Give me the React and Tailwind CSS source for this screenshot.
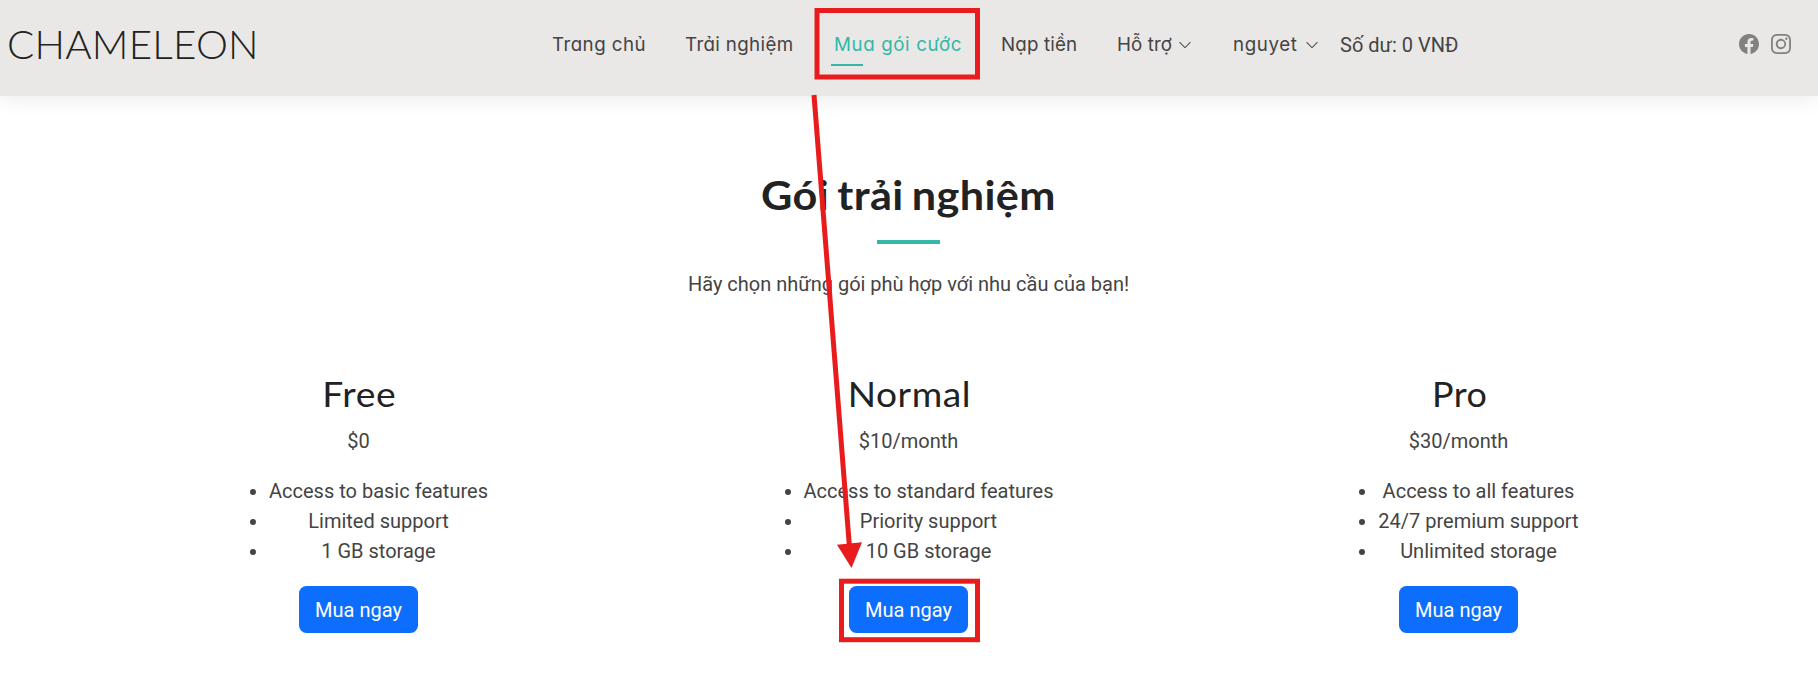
import { BsChevronDown, BsFacebook, BsInstagram } from "react-icons/bs";

const plans = [
  {
    name: "Free",
    price: "$0",
    features: ["Access to basic features", "Limited support", "1 GB storage"],
    stretch: "scale-x-[1.08]",
  },
  {
    name: "Normal",
    price: "$10/month",
    features: ["Access to standard features", "Priority support", "10 GB storage"],
    stretch: "scale-x-[1.075]",
  },
  {
    name: "Pro",
    price: "$30/month",
    features: ["Access to all features", "24/7 premium support", "Unlimited storage"],
    stretch: "scale-x-[1.04]",
  },
];

const links = [
  { label: "Trang chủ", box: "w-[133px]", spacing: "tracking-[0.45px]" },
  { label: "Trải nghiệm", box: "w-[149px]", spacing: "tracking-[0.35px]" },
  { label: "Mua gói cước", box: "w-[167px]", spacing: "tracking-[0.6px]", active: true },
  { label: "Nạp tiền", box: "w-[116px]", spacing: "tracking-[0.15px]" },
  { label: "Hỗ trợ", box: "w-[116px]", spacing: "tracking-[0.1px]", menu: "ml-[6px]" },
  { label: "nguyet", box: "w-[107px]", spacing: "tracking-[0.6px]", menu: "ml-[7px]" },
];

function NavLink({ label, box, spacing, active, menu }) {
  return (
    <a className={`relative flex shrink-0 items-center whitespace-nowrap ${box} ${active ? "text-[#34b7a7]" : ""}`}>
      <span className={spacing}>{label}</span>
      {menu && <BsChevronDown className={`size-[14px] ${menu}`} />}
      {active && <span className="absolute top-[33px] -left-[3px] h-[2px] w-8 bg-[#34b7a7]" />}
    </a>
  );
}

function Header() {
  return (
    <header className="flex h-24 items-start bg-[#e9e8e6] shadow-[0_0_22px_rgba(0,0,0,0.1)]">
      <div className="w-[552px] shrink-0 pt-[20px] pl-[7px]">
        <div className="origin-left scale-x-[1.022] font-['Lato',sans-serif] text-[39.5px] leading-[48px] font-light tracking-[0.2px] text-[#222222]">
          CHAMELEON
        </div>
      </div>
      <nav className="flex pt-[31px] font-['Inter',sans-serif] text-[18.75px] leading-[28px] [font-feature-settings:'cv11']">
        {links.map((link) => (
          <NavLink key={link.label} {...link} />
        ))}
      </nav>
      <span className="pt-[30px] text-[20px] leading-[30px] whitespace-nowrap">Số dư: 0 VNĐ</span>
      <div className="ml-auto flex gap-[12px] pt-[34px] pr-[27px] text-[#828180]">
        <BsFacebook className="size-5" />
        <BsInstagram className="size-5" />
      </div>
    </header>
  );
}

function Plan({ name, price, features, stretch }) {
  return (
    <div className="flex w-[550px] flex-col items-center">
      <h2 className={`-mt-px mb-[11px] pl-[2px] font-['Lato',sans-serif] text-[34.5px] leading-[42px] tracking-[0.5px] text-[#222222] ${stretch}`}>{name}</h2>
      <p className="mb-5">{price}</p>
      <ul className="mb-5 list-disc pl-10 text-center">
        {features.map((feature) => (
          <li key={feature}>{feature}</li>
        ))}
      </ul>
      <button className="h-[47px] w-[119px] rounded-[7.5px] bg-[#0d6efd] text-white">Mua ngay</button>
    </div>
  );
}

function Annotations() {
  return (
    <svg className="pointer-events-none absolute top-0 left-0" width="1818" height="697" fill="none">
      <rect x="817" y="10.5" width="160.5" height="66.5" stroke="#e81c1c" strokeWidth="5" />
      <rect x="841.5" y="581.2" width="136" height="58.5" stroke="#e81c1c" strokeWidth="5" />
      <path d="M814 95 849.3 545" stroke="#e81c1c" strokeWidth="5" />
      <path d="M837 544.7 862 542.3 851.5 568Z" fill="#e81c1c" />
    </svg>
  );
}

export default function App() {
  return (
    <div className="relative h-[697px] w-[1818px] overflow-hidden bg-white font-['Roboto',sans-serif] text-[20px] leading-[30px] text-[#444444]">
      <Header />
      <main className="w-[1817px]">
        <section className="flex flex-col items-center pt-[75px]">
          <h1 className="scale-x-[1.08] font-['Lato',sans-serif] text-[40px] leading-[48px] font-bold tracking-[0.35px] text-[#222222] [word-spacing:-2.5px]">Gói trải nghiệm</h1>
          <div className="mt-[21px] h-1 w-[63px] bg-[#34b7a7]" />
          <p className="mt-[25px]">Hãy chọn những gói phù hợp với nhu cầu của bạn!</p>
        </section>
        <section className="flex justify-center pt-[75px]">
          {plans.map((plan) => (
            <Plan key={plan.name} {...plan} />
          ))}
        </section>
      </main>
      <Annotations />
    </div>
  );
}
